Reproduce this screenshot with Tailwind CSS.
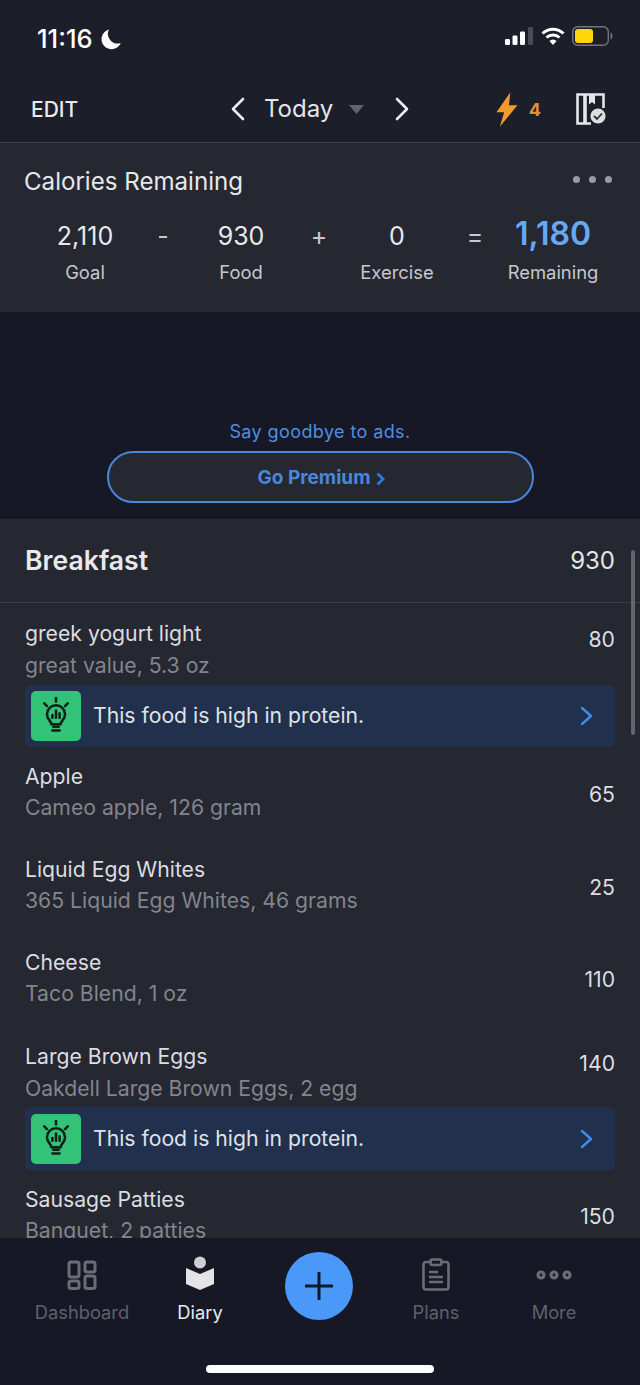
<!doctype html>
<html lang="en">
<head>
  <meta charset="UTF-8" />
  <meta name="viewport" content="width=device-width, initial-scale=1.0" />
  <title>Diary</title>
  <script src="https://cdn.jsdelivr.net/npm/@tailwindcss/browser@4"></script>
</head>
<body class="bg-[#1c1e2a] font-['Inter',sans-serif] text-[#e6e7ea]">
  <div class="relative flex h-[1385px] w-[640px] flex-col overflow-hidden">

    <!-- Status bar -->
    <div class="flex h-[76px] shrink-0 items-start justify-between pl-[37px] pr-[27px] pt-[24px]">
      <div class="flex items-center gap-[7px]">
        <span class="text-[25.500px] font-medium leading-[30px] text-white">11:16</span>
        <svg width="22" height="22" viewBox="0 0 22 22"><path d="M9 1.500a9.600 9.600 0 0 0 11.800 13.400A10 10 0 1 1 9 1.500z" fill="#fff"/></svg>
      </div>
      <div class="flex items-center gap-[7px] pt-[2px]">
        <svg width="29" height="18" viewBox="0 0 29 18">
          <rect x="0" y="12" width="5" height="6" rx="1.200" fill="#fff"/>
          <rect x="7.500" y="8.500" width="5" height="9.500" rx="1.200" fill="#fff"/>
          <rect x="15" y="4.500" width="5" height="13.500" rx="1.200" fill="#fff"/>
          <rect x="23" y="0" width="5" height="18" rx="1.200" fill="#4a4c55"/>
        </svg>
        <svg width="24" height="18" viewBox="0 0 24 18" fill="none" stroke="#fff" stroke-width="3">
          <path d="M1.500 6.500a15 15 0 0 1 21 0"/>
          <path d="M5.500 10.500a9.500 9.500 0 0 1 13 0"/>
          <path d="M12 18l-3.600-4a5 5 0 0 1 7.200 0z" fill="#fff" stroke="none"/>
        </svg>
        <svg width="41" height="20" viewBox="0 0 41 20">
          <rect x="0.700" y="0.700" width="35.600" height="18.600" rx="5" fill="none" stroke="#74757b" stroke-width="1.400"/>
          <rect x="3" y="3" width="18" height="14" rx="3" fill="#ffd60a"/>
          <path d="M38.500 6.500c1.500.5 2 2 2 3.500s-.5 3-2 3.500z" fill="#74757b"/>
        </svg>
      </div>
    </div>

    <!-- Top nav -->
    <div class="relative flex h-[67px] shrink-0 items-center border-b border-[#3c3e49] pl-[31px] pr-[32px]">
      <span class="pt-[2px] text-[21px] font-medium text-[#e8e9ec]">EDIT</span>
      <div class="absolute left-[230px] top-[18px] flex items-center">
        <svg width="15" height="24" viewBox="0 0 15 24" fill="none" stroke="#eceded" stroke-width="2.600" stroke-linecap="round" stroke-linejoin="round"><path d="M13 2L3 12l10 10"/></svg>
        <span class="ml-[19px] text-[24px] leading-[30px] text-[#e4e5e8]">Today</span>
        <svg class="ml-[16px] mt-[1px]" width="15" height="9" viewBox="0 0 15 9"><path d="M0 0h15L7.500 9z" fill="#62646c"/></svg>
        <svg class="ml-[31px]" width="15" height="24" viewBox="0 0 15 24" fill="none" stroke="#eceded" stroke-width="2.600" stroke-linecap="round" stroke-linejoin="round"><path d="M2 2l10 10L2 22"/></svg>
      </div>
      <div class="ml-auto flex items-center">
        <svg width="22" height="35" viewBox="0 0 23 36"><path d="M15 0L0.500 21h8L4 36 22.500 13.500h-9z" fill="#f39a2e"/></svg>
        <span class="ml-[11px] text-[18px] font-bold text-[#e58f2f]">4</span>
        <svg class="ml-[35px] mr-[1px]" width="31" height="32" viewBox="0 0 31 32">
          <path d="M15 30.500H1.500V1.500h26V15" fill="none" stroke="#e6e6e8" stroke-width="2.600"/>
          <path d="M9 1.500V30.500" stroke="#e6e6e8" stroke-width="3.600"/>
          <path d="M13 1.500h6v10l-3-2.500-3 2.500z" fill="#e6e6e8"/>
          <circle cx="22" cy="23" r="9" fill="#1c1e2a"/>
          <circle cx="22" cy="23" r="7.600" fill="#dcdde0"/>
          <path d="M18 23l3 3 5-5.500" fill="none" stroke="#2a2c36" stroke-width="1.800"/>
        </svg>
      </div>
    </div>

    <!-- Calories remaining -->
    <div class="h-[169px] shrink-0 bg-[#252731] pt-[23px]">
      <div class="flex items-center justify-between pl-[24px] pr-[28px]">
        <h2 class="text-[24.100px] leading-[32px] text-[#e6e7ea]">Calories Remaining</h2>
        <div class="flex gap-[9px] pb-[5px]">
          <span class="size-[7px] rounded-full bg-[#9a9ba1]"></span>
          <span class="size-[7px] rounded-full bg-[#9a9ba1]"></span>
          <span class="size-[7px] rounded-full bg-[#9a9ba1]"></span>
        </div>
      </div>
      <div class="mt-[18px] grid grid-cols-[100px_56px_100px_56px_100px_56px_100px] pl-[35px] text-center">
        <div>
          <div class="flex h-[42px] items-center justify-center text-[25px] text-[#e8e9ec]">2,110</div>
          <div class="mt-[1px] text-[18.400px] text-[#c7c8cd]">Goal</div>
        </div>
        <div class="flex h-[42px] items-center justify-center text-[25px] text-[#c7c8cd]">-</div>
        <div>
          <div class="flex h-[42px] items-center justify-center text-[25px] text-[#e8e9ec]">930</div>
          <div class="mt-[1px] text-[18.400px] text-[#c7c8cd]">Food</div>
        </div>
        <div class="flex h-[42px] items-center justify-center text-[25px] text-[#c7c8cd]">+</div>
        <div>
          <div class="flex h-[42px] items-center justify-center text-[25px] text-[#e8e9ec]">0</div>
          <div class="mt-[1px] text-[18.400px] text-[#c7c8cd]">Exercise</div>
        </div>
        <div class="flex h-[42px] items-center justify-center text-[25px] text-[#c7c8cd]">=</div>
        <div>
          <div class="flex h-[36px] items-center justify-center text-[32px] font-semibold text-[#66a9f2]">1,180</div>
          <div class="mt-[7px] text-[18.400px] text-[#c7c8cd]">Remaining</div>
        </div>
      </div>
    </div>

    <!-- Ad slot -->
    <div class="flex h-[207px] shrink-0 flex-col items-center justify-end bg-[#161825] pb-[16px]">
      <p class="text-[18px] leading-[24px] tracking-[0.4px] text-[#4f8fe0]">Say goodbye to ads.</p>
      <div class="mt-[7px] flex h-[52px] w-[427px] items-center justify-center gap-[6px] rounded-full border-2 border-[#4a87d8] bg-[#252731] pl-[3px] pt-[3px]">
        <span class="text-[19px] font-bold text-[#4a87d8]">Go Premium</span>
        <svg width="9" height="14" viewBox="0 0 9 14" fill="none" stroke="#2f7ade" stroke-width="2.800"><path d="M1.500 1.500L7 7l-5.500 5.500"/></svg>
      </div>
    </div>

    <!-- Diary list -->
    <div class="relative min-h-0 flex-1 overflow-hidden bg-[#252731]">
      <div class="flex h-[84px] items-center justify-between border-b border-[#3c3e49] px-[25px]">
        <h2 class="text-[26.600px] font-semibold text-[#e8e9ec]">Breakfast</h2>
        <span class="text-[24px] text-[#e4e5e8]">930</span>
      </div>

      <div class="px-[25px] text-[21.200px] text-[#dcdde1]">
        <!-- greek yogurt -->
        <div class="flex h-[82px] items-center justify-between pt-[9px]">
          <div>
            <div class="leading-[32px]">greek yogurt light</div>
            <div class="leading-[32px] text-[#83858c]">great value, 5.3 oz</div>
          </div>
          <span class="pb-[17px]">80</span>
        </div>
        <div class="flex h-[62px] items-center rounded-[4px] bg-[#21304c] pl-[6px] pr-[22px]">
          <span class="flex size-[50px] items-center justify-center rounded-[5px] bg-[#33c377]">
            <svg width="30" height="38" viewBox="0 0 32 42" fill="none" stroke="#0c2018" stroke-width="2.800" stroke-linecap="round">
              <path d="M16 1v4M3 7l3 3M29 7l-3 3"/>
              <path d="M11 30c0-3-5-5-5-11a10 10 0 0 1 20 0c0 6-5 8-5 11z"/>
              <path d="M12 37h8M13 33h6"/>
              <path d="M12 23v-3M16 23v-8M20 23v-5"/>
            </svg>
          </span>
          <span class="ml-[12px] flex-1 text-[21.200px] text-[#dfe2e8]">This food is high in protein.</span>
          <svg width="13" height="20" viewBox="0 0 13 20" fill="none" stroke="#3f8cf0" stroke-width="2.400" stroke-linecap="round" stroke-linejoin="round"><path d="M2 2l9 8-9 8"/></svg>
        </div>

        <!-- Apple -->
        <div class="flex h-[93px] items-center justify-between pb-[4px]">
          <div>
            <div class="leading-[31px]">Apple</div>
            <div class="leading-[31px] text-[#83858c]">Cameo apple, 126 gram</div>
          </div>
          <span class="pt-[6px]">65</span>
        </div>

        <!-- Liquid Egg Whites -->
        <div class="flex h-[93px] items-center justify-between pb-[4px]">
          <div>
            <div class="leading-[31px]">Liquid Egg Whites</div>
            <div class="leading-[31px] text-[#83858c]">365 Liquid Egg Whites, 46 grams</div>
          </div>
          <span class="pt-[6px]">25</span>
        </div>

        <!-- Cheese -->
        <div class="flex h-[93px] items-center justify-between pb-[4px]">
          <div>
            <div class="leading-[31px]">Cheese</div>
            <div class="leading-[31px] text-[#83858c]">Taco Blend, 1 oz</div>
          </div>
          <span class="pt-[4px]">110</span>
        </div>

        <!-- Large Brown Eggs -->
        <div class="flex h-[81px] items-center justify-between pt-[10px]">
          <div>
            <div class="leading-[32px]">Large Brown Eggs</div>
            <div class="leading-[32px] text-[#83858c]">Oakdell Large Brown Eggs, 2 egg</div>
          </div>
          <span class="pb-[15px]">140</span>
        </div>
        <div class="flex h-[63px] items-center rounded-[4px] bg-[#21304c] pl-[6px] pr-[22px]">
          <span class="flex size-[50px] items-center justify-center rounded-[5px] bg-[#33c377]">
            <svg width="30" height="38" viewBox="0 0 32 42" fill="none" stroke="#0c2018" stroke-width="2.800" stroke-linecap="round">
              <path d="M16 1v4M3 7l3 3M29 7l-3 3"/>
              <path d="M11 30c0-3-5-5-5-11a10 10 0 0 1 20 0c0 6-5 8-5 11z"/>
              <path d="M12 37h8M13 33h6"/>
              <path d="M12 23v-3M16 23v-8M20 23v-5"/>
            </svg>
          </span>
          <span class="ml-[12px] flex-1 text-[21.200px] text-[#dfe2e8]">This food is high in protein.</span>
          <svg width="13" height="20" viewBox="0 0 13 20" fill="none" stroke="#3f8cf0" stroke-width="2.400" stroke-linecap="round" stroke-linejoin="round"><path d="M2 2l9 8-9 8"/></svg>
        </div>

        <!-- Sausage Patties -->
        <div class="flex h-[93px] items-center justify-between pb-[4px]">
          <div>
            <div class="leading-[31px]">Sausage Patties</div>
            <div class="leading-[31px] text-[#83858c]">Banquet, 2 patties</div>
          </div>
          <span class="pt-[4px]">150</span>
        </div>
      </div>

      <!-- Scrollbar -->
      <div class="absolute right-[5px] top-[31px] h-[185px] w-[4px] rounded-full bg-[#63656d]"></div>
    </div>

    <!-- Tab bar -->
    <div class="relative grid h-[147px] shrink-0 grid-cols-5 bg-[#161825] pl-[23px] pr-[27px] pt-[22px] text-[18.300px] text-[#5f6169]">
      <div class="flex flex-col items-center">
        <svg width="30" height="30" viewBox="0 0 30 30" fill="none" stroke="#6b6d74" stroke-width="3">
          <rect x="2" y="2" width="10" height="15" rx="2"/>
          <rect x="18" y="2" width="10" height="10" rx="2"/>
          <rect x="2" y="21" width="10" height="7.500" rx="2"/>
          <rect x="18" y="16" width="10" height="12.500" rx="2"/>
        </svg>
        <span class="mt-[10px] leading-[24px]">Dashboard</span>
      </div>
      <div class="flex flex-col items-center">
        <svg width="30" height="34" viewBox="0 0 30 34" class="-mt-[4px]">
          <circle cx="15" cy="6.500" r="6" fill="#cfcfd2"/>
          <path d="M1 12l14 6 14-6v16l-14 6-14-6z" fill="#e4e4e6"/>
        </svg>
        <span class="mt-[10px] leading-[24px] text-[#e8e9ec]">Diary</span>
      </div>
      <div></div>
      <div class="flex flex-col items-center">
        <svg width="28" height="33" viewBox="0 0 28 33" fill="none" stroke="#6b6d74" stroke-width="2.600" class="-mt-[2px]">
          <rect x="1.500" y="4" width="25" height="27.500" rx="2.500"/>
          <rect x="8.500" y="1.500" width="11" height="5.500" rx="2" fill="#161825"/>
          <path d="M7 14h9M7 19h14M7 24h14"/>
        </svg>
        <span class="mt-[9px] leading-[24px]">Plans</span>
      </div>
      <div class="flex flex-col items-center">
        <svg width="36" height="30" viewBox="0 0 36 30" fill="none" stroke="#6b6d74" stroke-width="3.200">
          <circle cx="5" cy="15" r="3"/>
          <circle cx="18" cy="15" r="3"/>
          <circle cx="31" cy="15" r="3"/>
        </svg>
        <span class="mt-[10px] leading-[24px]">More</span>
      </div>

      <!-- Add button -->
      <div class="absolute left-[285px] top-[14px] flex size-[68px] items-center justify-center rounded-full bg-[#4a98f7]">
        <svg width="28" height="28" viewBox="0 0 28 28" stroke="#10172a" stroke-width="3" stroke-linecap="round"><path d="M14 1v26M1 14h26"/></svg>
      </div>

      <!-- Home indicator -->
      <div class="absolute bottom-[12px] left-[206px] h-[8px] w-[228px] rounded-full bg-white"></div>
    </div>
  </div>
</body>
</html>
